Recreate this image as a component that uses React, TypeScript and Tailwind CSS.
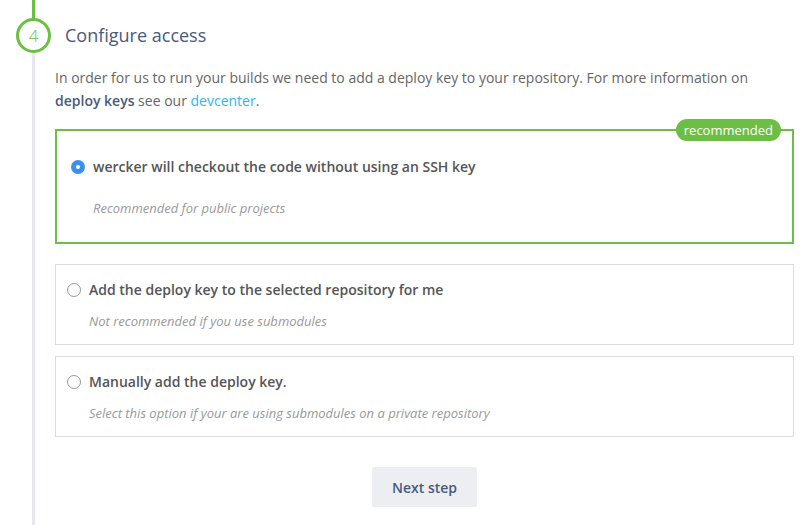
import { useState } from "react";

type Option = {
  id: string;
  title: string;
  note: string;
  recommended?: boolean;
};

const options: Option[] = [
  {
    id: "none",
    title: "wercker will checkout the code without using an SSH key",
    note: "Recommended for public projects",
    recommended: true,
  },
  {
    id: "auto",
    title: "Add the deploy key to the selected repository for me",
    note: "Not recommended if you use submodules",
  },
  {
    id: "manual",
    title: "Manually add the deploy key.",
    note: "Select this option if your are using submodules on a private repository",
  },
];

function Radio({ checked }: { checked: boolean }) {
  if (checked) {
    return (
      <span className="flex h-[14px] w-[14px] shrink-0 items-center justify-center rounded-full bg-[#3d8fef]">
        <span className="h-[4px] w-[4px] rounded-full bg-white" />
      </span>
    );
  }
  return <span className="h-[14px] w-[14px] shrink-0 rounded-full border border-[#9a9a9a] bg-white" />;
}

function OptionCard({ option, checked, onSelect }: { option: Option; checked: boolean; onSelect: () => void }) {
  const big = option.recommended;
  return (
    <div
      onClick={onSelect}
      className={
        big
          ? "relative cursor-pointer border-2 border-[#6cbe45] pl-[14px] pt-[26px] pb-[24px]"
          : "relative cursor-pointer border border-[#dcdcdc] pl-[11px] pt-[15px] pb-[13px]"
      }
    >
      {big && (
        <span className="absolute right-[11px] top-[-12px] rounded-full bg-[#6cbe45] px-[8px] text-[13px] leading-[22px] text-white">
          recommended
        </span>
      )}
      <div className="flex items-center gap-[8px]">
        <Radio checked={checked} />
        <span className="text-[14px] font-semibold leading-[20px] text-[#555]">{option.title}</span>
      </div>
      <div
        className={
          big
            ? "mt-[21px] pl-[22px] text-[13px] italic leading-[20px] text-[#999]"
            : "mt-[11px] pl-[22px] text-[13px] italic leading-[20px] text-[#999]"
        }
      >
        {option.note}
      </div>
    </div>
  );
}

export default function App() {
  const [selected, setSelected] = useState("none");

  return (
    <div className="flex h-[525px] w-[807px] overflow-hidden bg-white font-['Open_Sans',sans-serif]">
      {/* timeline gutter */}
      <div className="flex w-[55px] shrink-0 flex-col">
        <div className="ml-[32px] h-[18px] w-[3px] bg-[#6cbe45]" />
        <div className="ml-[16px] flex h-[35px] w-[35px] items-center justify-center rounded-full border-[3px] border-[#6cbe45] text-[17px] font-light text-[#6cbe45]">
          4
        </div>
        <div className="ml-[32px] w-[3px] flex-1 bg-[#e7e8ec]" />
      </div>

      <div className="w-[739px] pt-[22px]">
        <h2 className="ml-[10px] text-[18px] leading-[26px] text-[#4a5a7a]">Configure access</h2>

        <p className="mt-[18px] text-[14px] leading-[23px] text-[#666]">
          In order for us to run your builds we need to add a deploy key to your repository. For more information on{" "}
          <b className="font-semibold text-[#4a5a7a]">deploy keys</b> see our{" "}
          <a className="text-[#2fb5ec]">devcenter</a>.
        </p>

        <div className="mt-[17px] flex flex-col gap-[20px]">
          <OptionCard option={options[0]} checked={selected === "none"} onSelect={() => setSelected("none")} />
          <div className="flex flex-col gap-[11px]">
            {options.slice(1).map((o) => (
              <OptionCard key={o.id} option={o} checked={selected === o.id} onSelect={() => setSelected(o.id)} />
            ))}
          </div>
        </div>

        <div className="mt-[30px] flex justify-center">
          <button className="h-[40px] w-[105px] rounded-[2px] bg-[#eceef2] text-[14px] font-semibold text-[#4a5a7a]">
            Next step
          </button>
        </div>
      </div>
    </div>
  );
}
